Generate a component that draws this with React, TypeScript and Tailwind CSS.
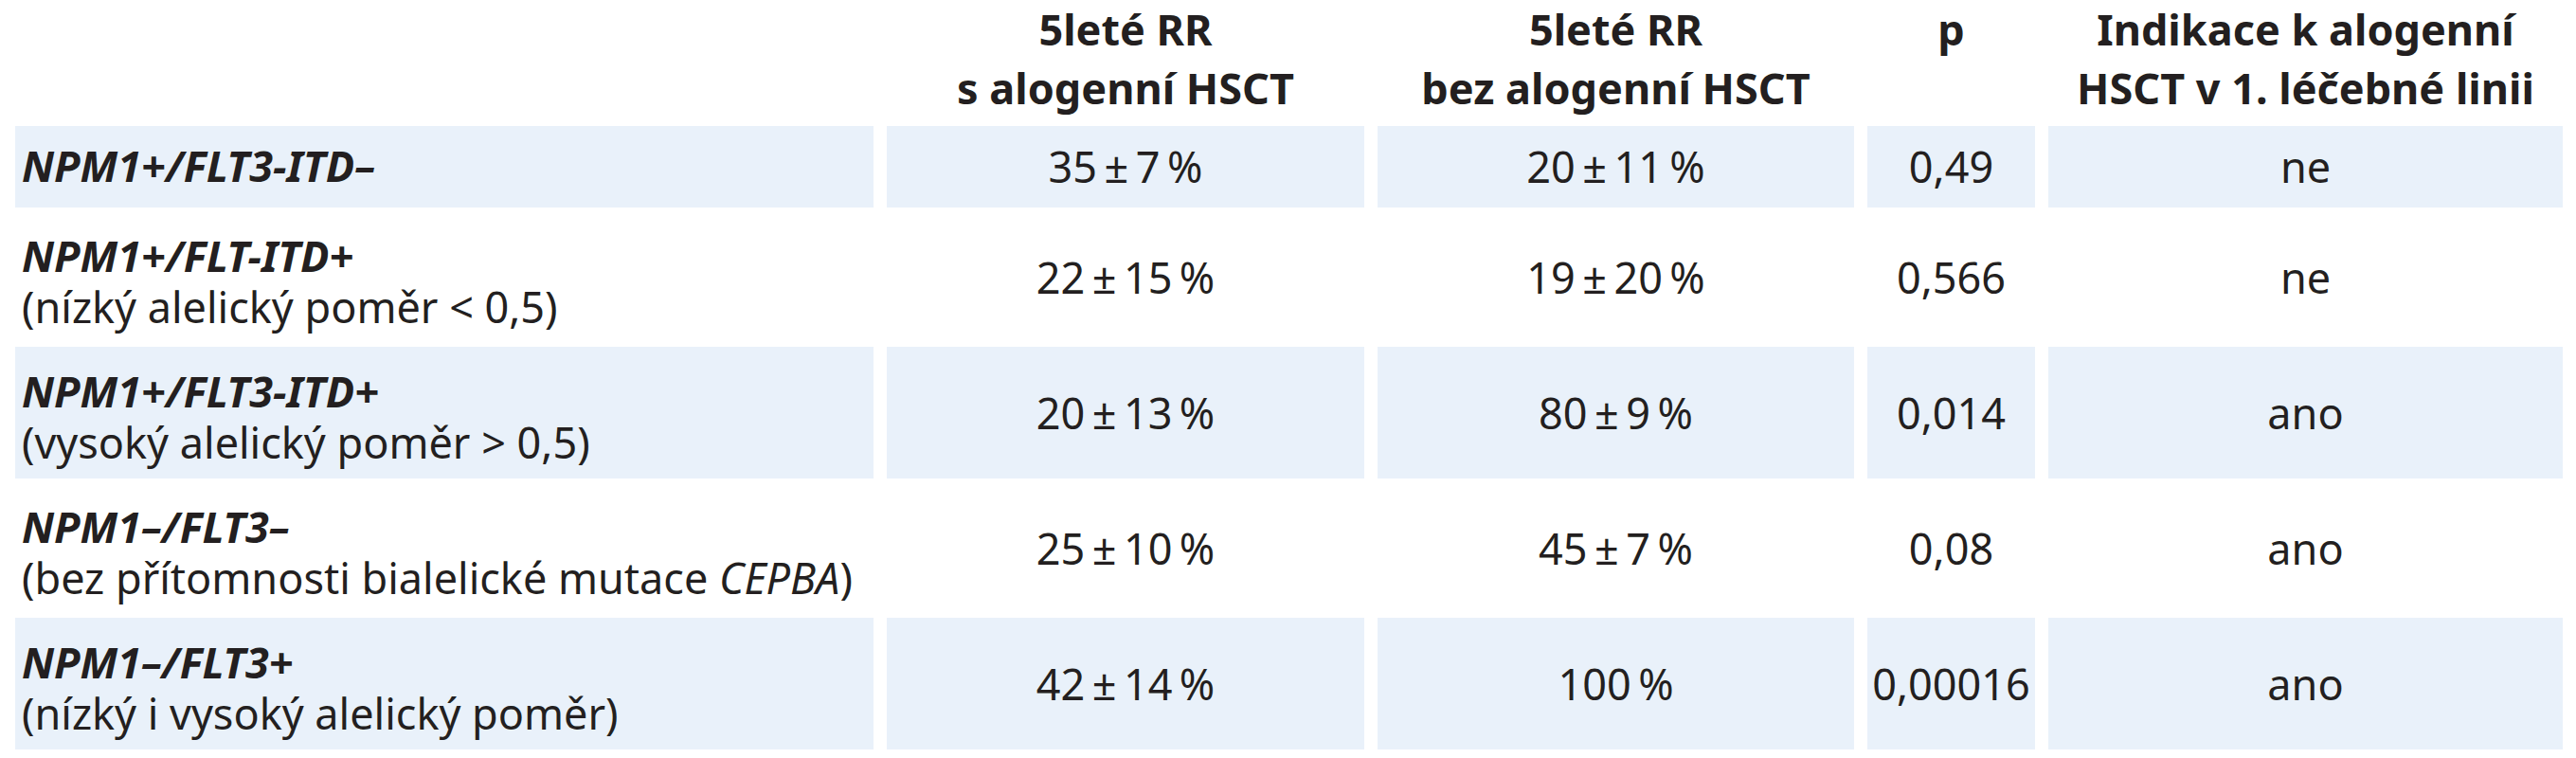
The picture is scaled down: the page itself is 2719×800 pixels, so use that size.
import React from 'react';

type Row = {
  name: string;
  note?: React.ReactNode;
  withHsct: string;
  withoutHsct: string;
  p: string;
  indication: string;
  shaded: boolean;
};

const rows: Row[] = [
  { name: 'NPM1+/FLT3-ITD–', withHsct: '35 ± 7 %', withoutHsct: '20 ± 11 %', p: '0,49', indication: 'ne', shaded: true },
  { name: 'NPM1+/FLT-ITD+', note: '(nízký alelický poměr < 0,5)', withHsct: '22 ± 15 %', withoutHsct: '19 ± 20 %', p: '0,566', indication: 'ne', shaded: false },
  { name: 'NPM1+/FLT3-ITD+', note: '(vysoký alelický poměr > 0,5)', withHsct: '20 ± 13 %', withoutHsct: '80 ± 9 %', p: '0,014', indication: 'ano', shaded: true },
  {
    name: 'NPM1–/FLT3–',
    note: (
      <>
        (bez přítomnosti bialelické mutace <i>CEPBA</i>)
      </>
    ),
    withHsct: '25 ± 10 %',
    withoutHsct: '45 ± 7 %',
    p: '0,08',
    indication: 'ano',
    shaded: false,
  },
  { name: 'NPM1–/FLT3+', note: '(nízký i vysoký alelický poměr)', withHsct: '42 ± 14 %', withoutHsct: '100 %', p: '0,00016', indication: 'ano', shaded: true },
];

// values in the source are set with thin spaces
const thin = (s: string) => s.replace(/ /g, '\u2009');

const headCell = 'text-center font-bold leading-[62px]';

const App = () => {
  return (
    <div
      className="h-[800px] w-[2719px] overflow-hidden bg-white pl-[16px] text-[#231f20]"
      style={{ fontFamily: '"Noto Sans", "Open Sans", sans-serif' }}
    >
      <div className="grid grid-cols-[906px_504px_503px_177px_543px] gap-x-[14px] gap-y-[4px] whitespace-nowrap text-[45px] leading-[54px]">
        {/* header */}
        <div className="h-[129px]" />
        <div className={headCell}>
          5leté RR
          <br />s alogenní HSCT
        </div>
        <div className={headCell}>
          5leté RR
          <br />
          bez alogenní HSCT
        </div>
        <div className={headCell}>p</div>
        <div className={headCell}>
          Indikace k alogenní
          <br />
          HSCT v 1. léčebné linii
        </div>

        {rows.map((row) => {
          const bg = row.shaded ? 'bg-[#e9f1fa]' : 'bg-white';
          const h = row.note ? 'h-[139px]' : 'h-[86px]';
          return (
            <React.Fragment key={row.name}>
              <div className={`${bg} ${h} ${row.note ? 'pt-[20px]' : 'pt-[15px]'} pl-[7px]`}>
                <div className="font-bold italic">{row.name}</div>
                {row.note && <div>{row.note}</div>}
              </div>
              <div className={`${bg} ${h} flex items-center justify-center`}>{thin(row.withHsct)}</div>
              <div className={`${bg} ${h} flex items-center justify-center`}>{thin(row.withoutHsct)}</div>
              <div className={`${bg} ${h} flex items-center justify-center`}>{row.p}</div>
              <div className={`${bg} ${h} flex items-center justify-center`}>{row.indication}</div>
            </React.Fragment>
          );
        })}
      </div>
    </div>
  );
};

export default App;
